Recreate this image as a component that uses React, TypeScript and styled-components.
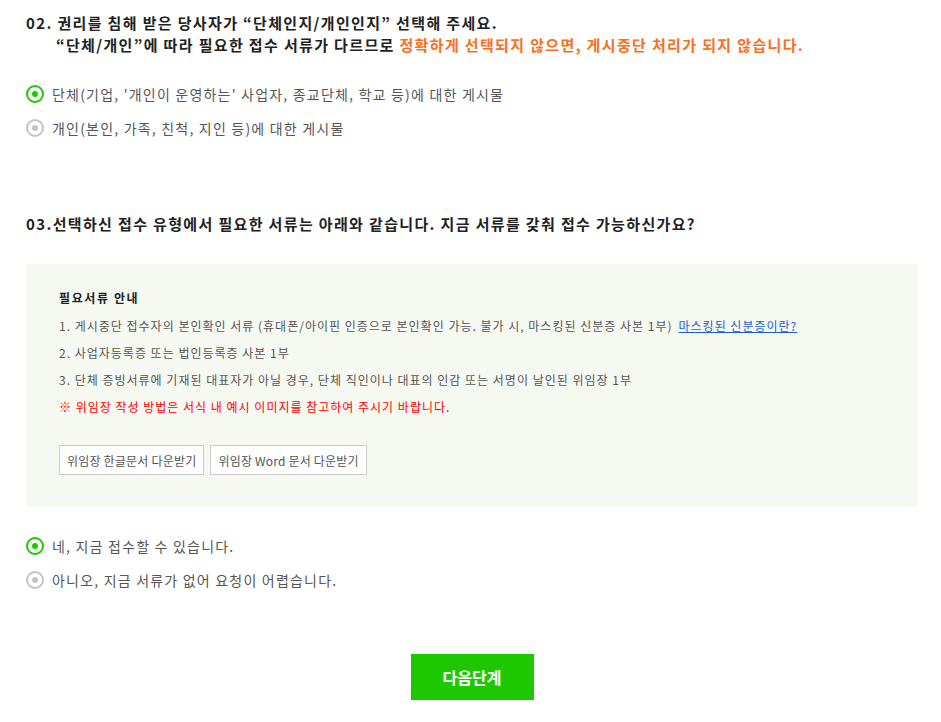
import React, { useState } from "react";
import styled, { createGlobalStyle } from "styled-components";

const Global = createGlobalStyle`
  html, body { margin: 0; padding: 0; background: #fff; }
  body { font-family: "Noto Sans CJK KR", "Noto Sans", sans-serif; color: #222; }
`;

const Page = styled.div`
  width: 892px;
  padding: 12px 0 22px 26px;
  display: flex;
  flex-direction: column;
`;

const Question = styled.h2`
  margin: 0;
  font-size: 15px;
  font-weight: 700;
  line-height: 22px;
  color: #222;
  letter-spacing: 1.35px;
  white-space: nowrap;
`;

const Indent = styled.span`
  display: block;
  padding-left: 30px;
`;

const Warn = styled.span`
  color: #fa6e1e;
`;

const Options = styled.div<{ $top: number; $bottom: number }>`
  display: flex;
  flex-direction: column;
  gap: 14px;
  margin-top: ${(p) => p.$top}px;
  margin-bottom: ${(p) => p.$bottom}px;
`;

const OptionRow = styled.label`
  display: flex;
  align-items: center;
  gap: 8px;
  height: 20px;
  font-size: 14px;
  letter-spacing: 1.2px;
  color: #555;
  cursor: pointer;
`;

const Radio = styled.span<{ $on: boolean }>`
  box-sizing: border-box;
  width: 18px;
  height: 18px;
  border-radius: 50%;
  border: 2px solid ${(p) => (p.$on ? "#1ec800" : "#c4c4c4")};
  display: flex;
  align-items: center;
  justify-content: center;
  &::after {
    content: "";
    width: 6px;
    height: 6px;
    border-radius: 50%;
    background: ${(p) => (p.$on ? "#1ec800" : "#c4c4c4")};
  }
`;

const InfoBox = styled.div`
  margin-top: 29px;
  background: #f5f9f2;
  padding: 25px 32px 32px 33px;
  display: flex;
  flex-direction: column;
`;

const InfoTitle = styled.div`
  font-size: 12px;
  font-weight: 700;
  letter-spacing: 1.6px;
  color: #222;
  line-height: 18px;
  margin-bottom: 5px;
`;

const InfoItem = styled.div<{ $red?: boolean }>`
  font-size: 12px;
  line-height: 27px;
  letter-spacing: 1px;
  color: ${(p) => (p.$red ? "#f00" : "#555")};
`;

const Link = styled.a`
  color: #1a5ec8;
  text-decoration: underline;
  margin-left: 6px;
`;

const BtnRow = styled.div`
  display: flex;
  gap: 6px;
  margin-top: 25px;
`;

const FileBtn = styled.button`
  height: 30px;
  padding: 0 7px;
  border: 1px solid #ccc;
  background: #fff;
  font-family: inherit;
  font-size: 12px;
  letter-spacing: 0.2px;
  color: #555;
  cursor: pointer;
`;

const Footer = styled.div`
  display: flex;
  justify-content: center;
  margin-top: 64px;
`;

const NextBtn = styled.button`
  width: 123px;
  height: 46px;
  border: 0;
  background: #1ec800;
  color: #fff;
  font-family: inherit;
  font-size: 16px;
  font-weight: 700;
  cursor: pointer;
`;

export default function App() {
  const [type, setType] = useState(0);
  const [ready, setReady] = useState(0);
  return (
    <>
      <Global />
      <Page>
        <Question>
          02. 권리를 침해 받은 당사자가 “단체인지/개인인지” 선택해 주세요.
          <Indent>
            “단체/개인”에 따라 필요한 접수 서류가 다르므로{" "}
            <Warn>정확하게 선택되지 않으면, 게시중단 처리가 되지 않습니다.</Warn>
          </Indent>
        </Question>
        <Options $top={28} $bottom={75}>
          <OptionRow onClick={() => setType(0)}>
            <Radio $on={type === 0} />
            단체(기업, '개인이 운영하는' 사업자, 종교단체, 학교 등)에 대한 게시물
          </OptionRow>
          <OptionRow onClick={() => setType(1)}>
            <Radio $on={type === 1} />
            개인(본인, 가족, 친척, 지인 등)에 대한 게시물
          </OptionRow>
        </Options>
        <Question>03.선택하신 접수 유형에서 필요한 서류는 아래와 같습니다. 지금 서류를 갖춰 접수 가능하신가요?</Question>
        <InfoBox>
          <InfoTitle>필요서류 안내</InfoTitle>
          <InfoItem>
            1. 게시중단 접수자의 본인확인 서류 (휴대폰/아이핀 인증으로 본인확인 가능. 불가 시, 마스킹된 신분증 사본 1부)
            <Link href="#">마스킹된 신분증이란?</Link>
          </InfoItem>
          <InfoItem>2. 사업자등록증 또는 법인등록증 사본 1부</InfoItem>
          <InfoItem>3. 단체 증빙서류에 기재된 대표자가 아닐 경우, 단체 직인이나 대표의 인감 또는 서명이 날인된 위임장 1부</InfoItem>
          <InfoItem $red>※ 위임장 작성 방법은 서식 내 예시 이미지를 참고하여 주시기 바랍니다.</InfoItem>
          <BtnRow>
            <FileBtn>위임장 한글문서 다운받기</FileBtn>
            <FileBtn>위임장 Word 문서 다운받기</FileBtn>
          </BtnRow>
        </InfoBox>
        <Options $top={29} $bottom={0}>
          <OptionRow onClick={() => setReady(0)}>
            <Radio $on={ready === 0} />
            네, 지금 접수할 수 있습니다.
          </OptionRow>
          <OptionRow onClick={() => setReady(1)}>
            <Radio $on={ready === 1} />
            아니오, 지금 서류가 없어 요청이 어렵습니다.
          </OptionRow>
        </Options>
        <Footer>
          <NextBtn>다음단계</NextBtn>
        </Footer>
      </Page>
    </>
  );
}
